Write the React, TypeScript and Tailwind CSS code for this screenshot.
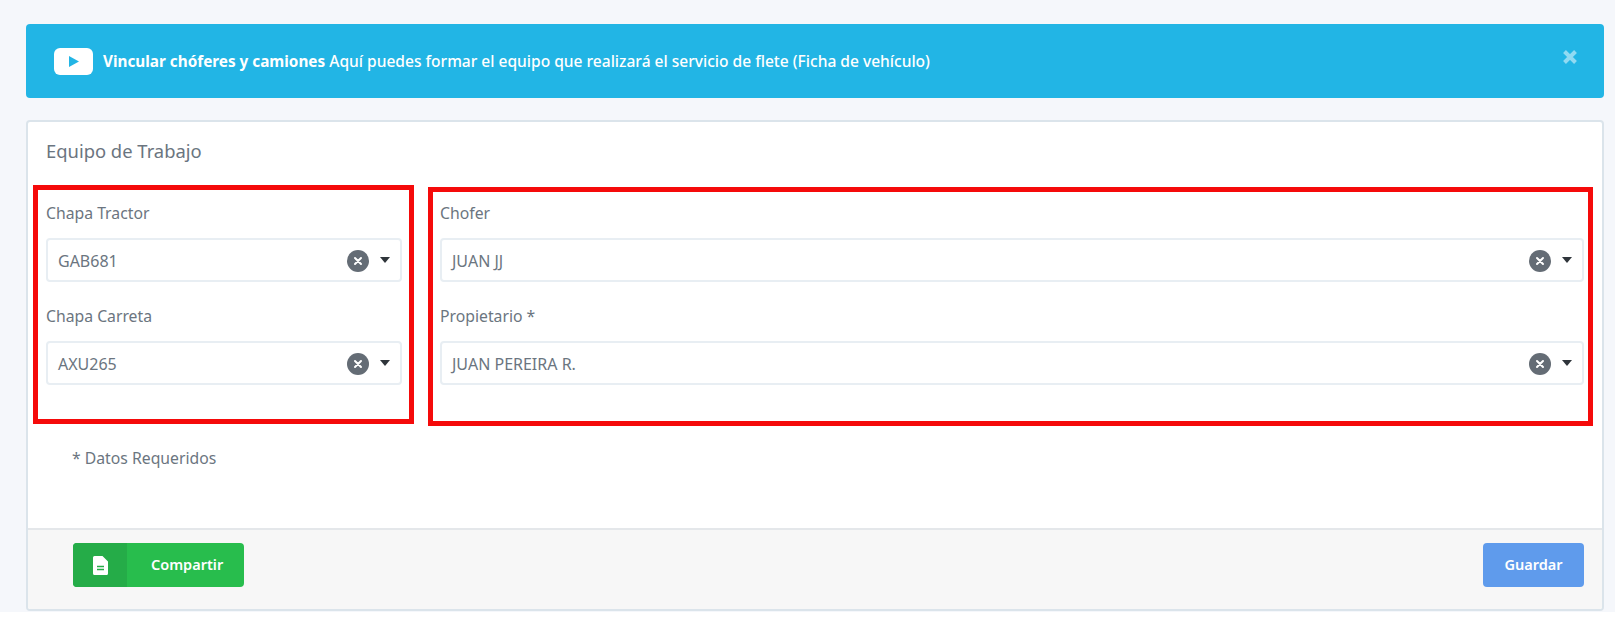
const font = "font-['Noto_Sans',sans-serif]";

function Field({ label, value, className }: { label: string; value: string; className?: string }) {
  return (
    <div className={className}>
      <label className="block h-6 text-[15.75px] leading-[22px] text-[#6b7580]">{label}</label>
      <div className="mt-3 flex h-[44px] items-center rounded border-2 border-[#e8eef3] bg-white pl-[10px] pr-[10px] pt-px">
        <span className="flex-1 text-[16px] text-[#6b7580]">{value}</span>
        <span className="flex h-[22px] w-[22px] items-center justify-center rounded-full bg-[#646c75]">
          <svg width="10" height="10" viewBox="0 0 10 10">
            <path d="M2 2l6 6M8 2l-6 6" stroke="#fff" strokeWidth="2" strokeLinecap="round" />
          </svg>
        </span>
        <svg className="ml-[11px] -translate-y-[1px]" width="10" height="6" viewBox="0 0 10 6">
          <path d="M0 0h10L5 6z" fill="#2f353b" />
        </svg>
      </div>
    </div>
  );
}

export default function App() {
  return (
    <div className={`${font} flex h-[612px] flex-col bg-[#f5f7fb] pb-px pl-[26px] pr-[11px] pt-6`}>
      {/* Banner */}
      <div className="flex h-[74px] shrink-0 items-center rounded bg-[#22b5e5] pl-[28px] pr-[26px]">
        <span className="flex h-[27px] w-[39px] items-center justify-center rounded-md bg-white">
          <svg width="11" height="11" viewBox="0 0 11 11">
            <path d="M1 0l10 5.5L1 11z" fill="#22b5e5" />
          </svg>
        </span>
        <p className="ml-[10px] flex-1 pt-[2px] text-[15.55px] font-medium text-white">
          <b className="text-[15.3px] font-bold">Vincular chóferes y camiones</b> Aquí puedes formar el equipo que realizará el servicio de flete (Ficha de vehículo)
        </p>
        <svg className="-translate-y-[4px] opacity-50" width="16" height="16" viewBox="0 0 16 16">
          <path d="M2.5 2.5l11 11M13.5 2.5l-11 11" stroke="#fff" strokeWidth="4" />
        </svg>
      </div>

      {/* Card */}
      <div className="mt-[22px] flex flex-1 flex-col overflow-hidden rounded border-2 border-[#dbe4eb] bg-white">
        <h2 className="h-[63px] pl-[18px] pt-[15px] text-[18.4px] font-normal leading-7 text-[#6b7580]">Equipo de Trabajo</h2>

        <div className="flex items-start gap-[14px] pl-[5px] pr-[9px]">
          <div className="h-[239px] w-[381px] shrink-0 border-[5px] border-[#f50a0a] pl-[8px] pr-[7px] pt-3">
            <Field label="Chapa Tractor" value="GAB681" />
            <Field label="Chapa Carreta" value="AXU265" className="mt-[23px]" />
          </div>
          <div className="mt-[2px] h-[239px] flex-1 border-[5px] border-[#f50a0a] pl-[7px] pr-[4px] pt-[10px]">
            <Field label="Chofer" value="JUAN JJ" />
            <Field label="Propietario *" value="JUAN PEREIRA R." className="mt-[23px]" />
          </div>
        </div>

        <p className="pl-[44px] pt-[20px] text-[15.75px] leading-6 text-[#6b7580]">* Datos Requeridos</p>

        <div className="mt-auto flex h-[81px] items-start justify-between border-t-2 border-[#e4e7ea] bg-[#f7f7f7] pl-[45px] pr-[18px] pt-[13px]">
          <button className="flex h-[44px] w-[171px] items-center overflow-hidden rounded bg-[#28bd4d] text-[14.5px] font-semibold text-white">
            <span className="flex h-full w-[54px] items-center justify-center bg-[#25ac48]">
              <svg width="15" height="19" viewBox="0 0 15 19">
                <path d="M1.5 0H9.5L15 5.5V17.5a1.5 1.5 0 0 1-1.5 1.5h-12A1.5 1.5 0 0 1 0 17.5V1.5A1.5 1.5 0 0 1 1.5 0z" fill="#fff" />
                <path d="M4 10.5h7M4 13.5h7" stroke="#25ac48" strokeWidth="1.5" />
              </svg>
            </span>
            <span className="ml-[24px]">Compartir</span>
          </button>
          <button className="h-[44px] w-[101px] rounded bg-[#5f9bec] text-[14.5px] font-semibold text-white">Guardar</button>
        </div>
      </div>
    </div>
  );
}
